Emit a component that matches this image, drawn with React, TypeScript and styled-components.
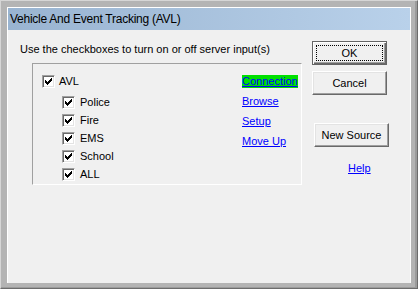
import React from "react";
import styled, { createGlobalStyle, css } from "styled-components";

const Global = createGlobalStyle`
  html, body { margin: 0; padding: 0; background: #b4b4b4; }
  body { font-family: "Liberation Sans", Arial, sans-serif; font-size: 11px; color: #000; }
`;

const Window = styled.div`
  box-sizing: border-box;
  width: 418px;
  height: 289px;
  background: #b4b4b4;
  border: 1px solid;
  border-color: #d6d6d6 #6d6d6d #6d6d6d #d6d6d6;
  box-shadow: inset -2px -1px 0 #9c9c9c;
  padding: 6px 6px 5px 6px;
`;

const Panel = styled.div`
  box-sizing: border-box;
  height: 100%;
  background: #f0f0f0;
  border: 1px solid #fff;
  border-bottom: none;
  display: flex;
  flex-direction: column;
`;

const TitleBar = styled.div`
  height: 22px;
  flex: none;
  display: flex;
  align-items: center;
  padding-left: 2px;
  background: linear-gradient(to right, #99b4d1, #b9d1ea);
  font-size: 12px;
  letter-spacing: -0.25px;
  color: #000;
`;

const Body = styled.div`
  display: flex;
  gap: 10px;
  padding: 11px 0 0 12px;
`;

const LeftCol = styled.div`
  width: 282px;
  display: flex;
  flex-direction: column;
`;

const Instruction = styled.div`
  margin-top: 1px;
  line-height: 14px;
  height: 14px;
  white-space: nowrap;
`;

const GroupBox = styled.div`
  box-sizing: border-box;
  margin: 7px 0 0 12px;
  width: 270px;
  height: 122px;
  border: 1px solid;
  border-color: #a0a0a0 #fff #fff #a0a0a0;
  display: flex;
  padding: 11px 0 0 9px;
`;

const Tree = styled.div`
  width: 200px;
  display: flex;
  flex-direction: column;
`;

const SubList = styled.div`
  display: flex;
  flex-direction: column;
  margin: 5px 0 0 20px;
`;

const Row = styled.div<{ $sub?: boolean }>`
  display: flex;
  align-items: center;
  gap: ${(p) => (p.$sub ? 5 : 4)}px;
  height: ${(p) => (p.$sub ? 18 : 13)}px;
  line-height: 13px;
`;

const Box = styled.span`
  box-sizing: border-box;
  width: 13px;
  height: 13px;
  flex: none;
  background: #fff;
  border: 1px solid;
  border-color: #a0a0a0 #fff #fff #a0a0a0;
  box-shadow: inset 1px 1px 0 #696969, inset -1px -1px 0 #e3e3e3;
  display: flex;
  align-items: center;
  justify-content: center;
`;

const Links = styled.div`
  display: flex;
  flex-direction: column;
  align-items: flex-start;
  gap: 7px;
`;

const Link = styled.a<{ $active?: boolean }>`
  color: #0000ff;
  text-decoration: underline;
  line-height: 13px;
  height: 13px;
  cursor: pointer;
  white-space: nowrap;
  ${(p) =>
    p.$active &&
    css`
      background: #00e000;
    `}
`;

const RightCol = styled.div`
  width: 77px;
  display: flex;
  flex-direction: column;
  align-items: flex-start;
`;

const Button = styled.button<{ $default?: boolean; $gapTop?: number; $indent?: number }>`
  position: relative;
  box-sizing: border-box;
  width: 75px;
  height: 24px;
  padding: 0;
  margin-top: ${(p) => p.$gapTop ?? 0}px;
  margin-left: ${(p) => p.$indent ?? 0}px;
  background: #f0f0f0;
  font-family: "Liberation Sans", Arial, sans-serif;
  font-size: 11px;
  color: #000;
  border: 1px solid;
  border-color: #fff #696969 #696969 #fff;
  box-shadow: inset -1px -1px 0 #a0a0a0, inset 1px 1px 0 #e3e3e3;
  ${(p) =>
    p.$default &&
    css`
      border-color: #646464;
      box-shadow: inset 1px 1px 0 #fff, inset -1px -1px 0 #696969, inset -2px -2px 0 #a0a0a0;
      &::after {
        content: "";
        position: absolute;
        inset: 3px;
        border: 1px dotted #000;
      }
    `}
`;

const HelpWrap = styled.div`
  margin: 14px 0 0 36px;
  line-height: 14px;
`;

const Check = () => (
  <svg width="7" height="7" viewBox="0 0 7 7" shapeRendering="crispEdges">
    <g fill="#000">
      <rect x="6" y="0" width="1" height="1" />
      <rect x="5" y="1" width="2" height="1" />
      <rect x="0" y="2" width="1" height="1" />
      <rect x="4" y="2" width="3" height="1" />
      <rect x="0" y="3" width="2" height="1" />
      <rect x="3" y="3" width="3" height="1" />
      <rect x="0" y="4" width="5" height="1" />
      <rect x="1" y="5" width="3" height="1" />
      <rect x="2" y="6" width="1" height="1" />
    </g>
  </svg>
);

const CheckItem = ({ label, sub }: { label: string; sub?: boolean }) => (
  <Row $sub={sub}>
    <Box>
      <Check />
    </Box>
    <span>{label}</span>
  </Row>
);

export default function App() {
  const subs = ["Police", "Fire", "EMS", "School", "ALL"];
  return (
    <>
      <Global />
      <Window>
        <Panel>
          <TitleBar>Vehicle And Event Tracking (AVL)</TitleBar>
          <Body>
            <LeftCol>
              <Instruction>Use the checkboxes to turn on or off server input(s)</Instruction>
              <GroupBox>
                <Tree>
                  <CheckItem label="AVL" />
                  <SubList>
                    {subs.map((s) => (
                      <CheckItem key={s} label={s} sub />
                    ))}
                  </SubList>
                </Tree>
                <Links>
                  <Link $active>Connection</Link>
                  <Link>Browse</Link>
                  <Link>Setup</Link>
                  <Link>Move Up</Link>
                </Links>
              </GroupBox>
            </LeftCol>
            <RightCol>
              <Button $default>OK</Button>
              <Button $gapTop={6}>Cancel</Button>
              <Button $gapTop={28} $indent={2}>New Source</Button>
              <HelpWrap>
                <Link>Help</Link>
              </HelpWrap>
            </RightCol>
          </Body>
        </Panel>
      </Window>
    </>
  );
}
